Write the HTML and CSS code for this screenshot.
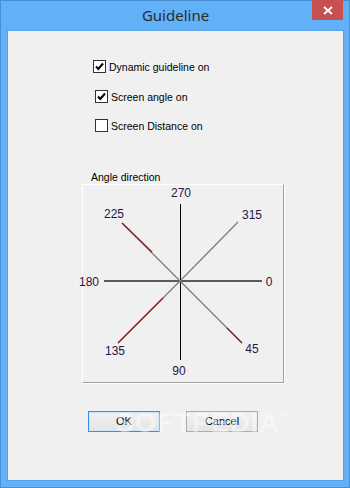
FILE: index.html
```html
<!DOCTYPE html>
<html lang="en">
<head>
<meta charset="UTF-8">
<title>Guideline</title>
<link rel="stylesheet" href="styles.css">
</head>
<body>
<div class="window">
  <div class="titlebar">
    <span></span>
    <span class="title">Guideline</span>
    <span class="closeButton">
      <svg width="10" height="9" viewBox="0 0 10 9"><path d="M1 1 L9 8 M9 1 L1 8" stroke="#fff" stroke-width="2"/></svg>
    </span>
  </div>

  <div class="client">
    <div class="options">
      <label class="option">
        <span class="box"><svg width="11" height="11" viewBox="0 0 11 11"><path d="M2 5.5 L4.3 8 L9 2.5" stroke="#000" stroke-width="2" fill="none"/></svg></span>
        Dynamic guideline on
      </label>
      <label class="option shifted">
        <span class="box"><svg width="11" height="11" viewBox="0 0 11 11"><path d="M2 5.5 L4.3 8 L9 2.5" stroke="#000" stroke-width="2" fill="none"/></svg></span>
        Screen angle on
      </label>
      <label class="option shifted">
        <span class="box"></span>
        Screen Distance on
      </label>
    </div>

    <div class="panelLabel">Angle direction</div>
    <div class="panel">
      <svg class="compass" width="202" height="199" viewBox="0 0 202 199">
        <line x1="22" y1="97" x2="180" y2="97" stroke="#5c5c5c" stroke-width="2"/>
        <line x1="98.5" y1="20" x2="98.5" y2="176" stroke="#000" stroke-width="1"/>

        <line x1="40" y1="39" x2="98" y2="97" stroke="#7c7c7c" stroke-width="1.2"/>
        <line x1="40" y1="39" x2="70" y2="68" stroke="#8b1f1f" stroke-width="1.2"/>
        <line x1="156" y1="38" x2="98" y2="97" stroke="#7c7c7c" stroke-width="1.2"/>
        <line x1="36" y1="159" x2="98" y2="97" stroke="#7c7c7c" stroke-width="1.2"/>
        <line x1="36" y1="159" x2="81" y2="114" stroke="#8b1f1f" stroke-width="1.2"/>
        <line x1="98" y1="97" x2="160" y2="159" stroke="#7c7c7c" stroke-width="1.2"/>
        <line x1="145" y1="144" x2="160" y2="159" stroke="#8b1f1f" stroke-width="1.2"/>

        <text x="99" y="9" class="deg">270</text>
        <text x="32" y="30" class="deg">225</text>
        <text x="170" y="31" class="deg">315</text>
        <text x="7" y="98" class="deg">180</text>
        <text x="187" y="98" class="deg">0</text>
        <text x="33" y="167" class="deg">135</text>
        <text x="170" y="165" class="deg">45</text>
        <text x="97" y="187" class="deg">90</text>
      </svg>
    </div>

    <div class="buttons">
      <button class="dlgButton default">OK</button>
      <button class="dlgButton">Cancel</button>
      <span class="watermark">SOFTPEDIA<sup>®</sup></span>
    </div>
  </div>
</div>
</body>
</html>
```

FILE: styles.css
```css
body {
  margin: 0;
  background-color: #62b1f8;
}

.window {
  width: 350px;
  height: 488px;
  box-sizing: border-box;
  padding: 0 7px 7px 8px;
  background-color: #62b1f8;
  box-shadow: inset 0 0 0 1px #4a8fd0;
}

.titlebar {
  height: 31px;
  display: grid;
  grid-template-columns: 1fr auto 1fr;
  align-items: start;
}

.title {
  font-family: "Noto Sans", "Open Sans", sans-serif;
  font-size: 15px;
  color: #2b2b2b;
  line-height: 30px;
}

.closeButton {
  justify-self: end;
  width: 31px;
  height: 20px;
  background-color: #c75050;
  display: flex;
  align-items: center;
  justify-content: center;
}

.client {
  height: 449px;
  background-color: #f0f0f0;
  box-shadow: 0 0 0 1px #5a9fe0;
  position: relative;
  font-family: "Liberation Sans", Arial, sans-serif;
  font-size: 10.5px;
  color: #000;
}

.options {
  padding: 26px 0 0 85px;
  display: flex;
  flex-direction: column;
}

.option {
  height: 29.5px;
  display: flex;
  align-items: flex-start;
  gap: 3px;
  line-height: 20px;
}

.option.shifted {
  padding-left: 2px;
}

.box {
  width: 11px;
  height: 11px;
  margin-top: 3px;
  border: 1px solid #333;
  background-color: #fff;
  display: flex;
  align-items: center;
  justify-content: center;
}

.panelLabel {
  margin: 24px 0 0 83px;
  line-height: 14px;
}

.panel {
  width: 200px;
  height: 197px;
  margin: 0 0 0 74px;
  border: 1px solid;
  border-color: #fff #a0a0a0 #a0a0a0 #fff;
  box-shadow: 1px 1px 0 #fff;
}

.compass {
  display: block;
  margin: -1px;
  overflow: visible;
}

.deg {
  font-family: "Liberation Sans", Arial, sans-serif;
  font-size: 12px;
  fill: #2a1446;
  text-anchor: middle;
  dominant-baseline: central;
}

.buttons {
  margin: 28px 0 0 80px;
  display: flex;
  gap: 26px;
  position: relative;
}

.dlgButton {
  width: 72px;
  height: 21px;
  padding: 0;
  font-family: "Liberation Sans", Arial, sans-serif;
  font-size: 11px;
  color: #000;
  background: linear-gradient(#f0f0f0, #e5e5e5);
  border: 1px solid #acacac;
}

.dlgButton.default {
  border-color: #3c8de4;
  box-shadow: inset 0 0 0 1px #cde3fa;
}

.watermark {
  position: absolute;
  left: 28px;
  top: -3px;
  font-family: "Liberation Sans", Arial, sans-serif;
  font-weight: bold;
  font-size: 27px;
  letter-spacing: 1px;
  color: rgba(255, 255, 255, 0.45);
  pointer-events: none;
}

.watermark sup {
  font-size: 9px;
  vertical-align: 14px;
}
```
